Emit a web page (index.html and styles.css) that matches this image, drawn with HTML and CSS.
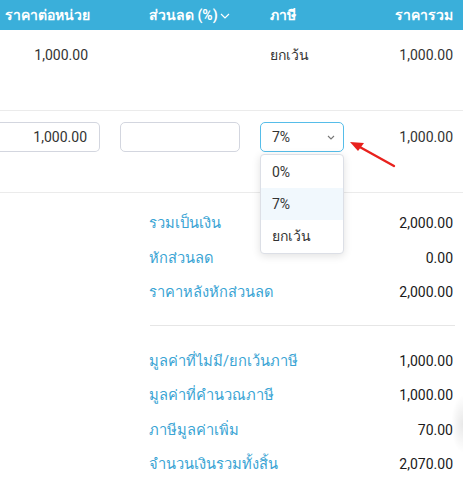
FILE: index.html
```html
<!DOCTYPE html>
<html lang="th">
<head>
    <meta charset="UTF-8">
    <meta name="viewport" content="width=device-width, initial-scale=1.0">
    <title>Invoice Items</title>
    <link rel="stylesheet" href="styles.css">
</head>
<body>
    <div class="sheet">
        <!-- Table header -->
        <div class="grid head">
            <div class="cell right">ราคาต่อหน่วย</div>
            <div class="cell disc-head">ส่วนลด (%)<svg class="chev" width="10" height="6" viewBox="0 0 10 6"><path d="M1 1l4 4 4-4" fill="none" stroke="#fff" stroke-width="1.2"/></svg></div>
            <div class="cell tax">ภาษี</div>
            <div class="cell right">ราคารวม</div>
        </div>

        <!-- Row 1 -->
        <div class="grid row">
            <div class="cell right num">1,000.00</div>
            <div class="cell"></div>
            <div class="cell tax">ยกเว้น</div>
            <div class="cell right num">1,000.00</div>
        </div>

        <!-- Row 2 (editing) -->
        <div class="grid row edit">
            <div class="cell"><div class="field right cut">1,000.00</div></div>
            <div class="cell"><div class="field"></div></div>
            <div class="cell picker">
                <div class="field select">7%<svg width="8" height="5" viewBox="0 0 8 5"><path d="M1 1l3 3 3-3" fill="none" stroke="#777" stroke-width="1.1"/></svg></div>
                <div class="menu">
                    <div class="opt">0%</div>
                    <div class="opt active">7%</div>
                    <div class="opt">ยกเว้น</div>
                </div>
            </div>
            <div class="cell right num mid">1,000.00</div>
        </div>
    </div>

    <svg class="arrow" width="60" height="40" viewBox="0 0 60 40">
        <line x1="48" y1="33" x2="12" y2="13" stroke="#e8211d" stroke-width="2.4" stroke-linecap="round"/>
        <path d="M4 9 L18 10 L12 18 Z" fill="#e8211d"/>
    </svg>

    <!-- Summary -->
    <div class="summary">
        <div class="line"><span class="label">รวมเป็นเงิน</span><span class="val">2,000.00</span></div>
        <div class="line"><span class="label">หักส่วนลด</span><span class="val">0.00</span></div>
        <div class="line"><span class="label">ราคาหลังหักส่วนลด</span><span class="val">2,000.00</span></div>
        <div class="sep"></div>
        <div class="line"><span class="label">มูลค่าที่ไม่มี/ยกเว้นภาษี</span><span class="val">1,000.00</span></div>
        <div class="line"><span class="label">มูลค่าที่คำนวณภาษี</span><span class="val">1,000.00</span></div>
        <div class="line"><span class="label">ภาษีมูลค่าเพิ่ม</span><span class="val">70.00</span></div>
        <div class="line"><span class="label">จำนวนเงินรวมทั้งสิ้น</span><span class="val">2,070.00</span></div>
    </div>

    <div class="edge-shadow"></div>
</body>
</html>
```

FILE: styles.css
```css
html, body {
    margin: 0;
    padding: 0;
    background: #fff;
    overflow: hidden;
}

body {
    width: 463px;
    height: 489px;
    position: relative;
    font-family: Roboto, "Noto Sans", "DejaVu Sans", sans-serif;
    font-size: 14px;
    color: #333;
}

.grid {
    display: grid;
    grid-template-columns: 100px 120px 84px 1fr;
    column-gap: 20px;
    padding-right: 10px;
}

.head {
    background: #3aafda;
    color: #fff;
    font-weight: bold;
    height: 30px;
    align-items: center;
}

.head .right {
    padding-right: 10px;
}

.head .cell:last-child {
    padding-right: 0;
}

.disc-head {
    padding-left: 29px;
    display: flex;
    align-items: center;
}

.chev {
    margin-left: 2px;
    margin-top: 2px;
}

.right {
    text-align: right;
}

.tax {
    padding-left: 10px;
}

.row {
    height: 81px;
    border-bottom: 1px solid #ebebeb;
    box-sizing: border-box;
    align-items: start;
}

.row .cell {
    padding-top: 15px;
    line-height: 20px;
}

.row .num:first-child {
    padding-right: 12px;
}

.edit {
    height: 82px;
}

.edit .cell {
    padding-top: 11px;
}

.edit .mid {
    padding-top: 16px;
}

.field {
    height: 30px;
    box-sizing: border-box;
    border: 1px solid #d3d6df;
    border-radius: 5px;
    padding: 0 12px;
    line-height: 28px;
    color: #333;
}

/* first input is scrolled past the left edge */
.field.cut {
    border-left: 0;
    border-radius: 0 5px 5px 0;
}

.select {
    border-color: #56bde9;
    display: flex;
    justify-content: space-between;
    align-items: center;
    padding-left: 11px;
    padding-right: 8px;
}

.picker {
    position: relative;
}

.menu {
    position: absolute;
    top: 43px;
    left: 0;
    width: 84px;
    box-sizing: border-box;
    background: #fff;
    border: 1px solid #dcdfe6;
    border-radius: 4px;
    box-shadow: 0 2px 8px rgba(0, 0, 0, 0.12);
    padding: 1px 0;
    z-index: 2;
}

.opt {
    height: 32px;
    line-height: 32px;
    padding-left: 11px;
    color: #333;
}

.opt.active {
    background: #f1f8fd;
}

.arrow {
    position: absolute;
    left: 346px;
    top: 133px;
}

.summary {
    margin: 13px 8px 0 149px;
}

.line {
    display: flex;
    justify-content: space-between;
    height: 34.5px;
    line-height: 34.5px;
}

.label {
    color: #3aa4d4;
    font-size: 14.7px;
}

.val {
    color: #1a1a1a;
    padding-right: 2px;
}

.sep {
    border-top: 1px solid #e6e6e6;
    margin: 15px 0 18px 1px;
}

.edge-shadow {
    position: absolute;
    right: 0;
    top: 395px;
    width: 12px;
    height: 58px;
    background: radial-gradient(ellipse at right center, rgba(0, 0, 0, 0.09), rgba(0, 0, 0, 0) 70%);
}
```
